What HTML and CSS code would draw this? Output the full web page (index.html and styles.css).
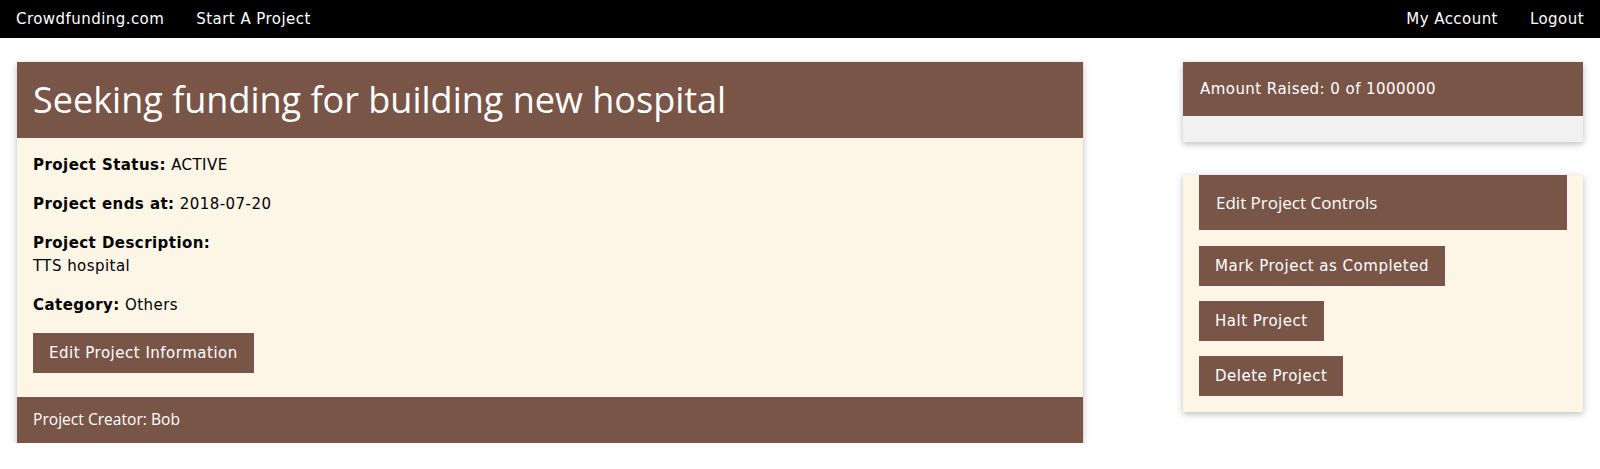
FILE: index.html
```html
<!DOCTYPE html>
<html lang="en">
<head>
<meta charset="utf-8">
<title>Crowdfunding.com</title>
<link rel="stylesheet" href="styles.css">
</head>
<body>
<nav class="topbar">
  <div class="topbar-group">
    <a class="topbar-link" href="#">Crowdfunding.com</a>
    <a class="topbar-link" href="#">Start A Project</a>
  </div>
  <div class="topbar-group">
    <a class="topbar-link" href="#">My Account</a>
    <a class="topbar-link" href="#">Logout</a>
  </div>
</nav>

<main class="page">
  <section class="card project-card">
    <header class="project-header">
      <h1 class="project-title">Seeking funding for building new hospital</h1>
    </header>
    <div class="project-body">
      <p class="field"><b>Project Status:</b> ACTIVE</p>
      <p class="field"><b>Project ends at:</b> 2018-07-20</p>
      <p class="field"><b>Project Description:</b><br>TTS hospital</p>
      <p class="field"><b>Category:</b> Others</p>
      <p class="field field-action"><button class="btn">Edit Project Information</button></p>
    </div>
    <footer class="project-footer">
      <p class="footer-text">Project Creator: Bob</p>
    </footer>
  </section>

  <aside class="side">
    <section class="card amount-card">
      <div class="amount-header">Amount Raised: 0 of 1000000</div>
      <div class="progress"><div class="progress-bar" style="width:0%"></div></div>
    </section>

    <section class="card controls-card">
      <div class="controls-header">Edit Project Controls</div>
      <div class="controls-list">
        <button class="btn">Mark Project as Completed</button>
        <button class="btn">Halt Project</button>
        <button class="btn">Delete Project</button>
      </div>
    </section>
  </aside>
</main>
</body>
</html>
```

FILE: styles.css
```css
* { box-sizing: border-box; }

html, body {
  margin: 0;
  padding: 0;
  background: #fff;
  color: #000;
  font-family: "DejaVu Sans", Verdana, sans-serif;
  font-size: 15px;
  line-height: 1.5;
  letter-spacing: 0.45px;
}

.topbar {
  display: flex;
  justify-content: space-between;
  background: #000;
  height: 38px;
}

.topbar-group {
  display: flex;
}

.topbar-link {
  display: block;
  padding: 8px 16px;
  color: #fff;
  text-decoration: none;
  line-height: 22px;
}

.page {
  display: flex;
  justify-content: space-between;
  align-items: flex-start;
  padding: 24px 17px 0 17px;
}

.card {
  box-shadow: 0 2px 5px 0 rgba(0,0,0,0.16), 0 2px 10px 0 rgba(0,0,0,0.12);
}

.project-card {
  width: 1066px;
  background: #fdf5e6;
}

.project-header {
  background: #795548;
  color: #fff;
  height: 76px;
  padding: 0 16px;
  display: flex;
  align-items: center;
}

.project-title {
  margin: 0;
  font-family: "Open Sans", "Noto Sans", sans-serif;
  font-weight: 400;
  font-size: 36px;
  line-height: 54px;
  letter-spacing: normal;
}

.project-body {
  padding: 0 16px;
  overflow: hidden;
}

.field {
  margin: 16px 0;
  line-height: 23px;
}

.field-action {
  margin-bottom: 24px;
}

.btn {
  display: inline-block;
  border: none;
  margin: 0;
  background: #795548;
  color: #fff;
  font-family: "DejaVu Sans", Verdana, sans-serif;
  font-size: 15px;
  letter-spacing: 0.5px;
  line-height: 22px;
  padding: 9px 16px;
  cursor: pointer;
}

.field .btn {
  vertical-align: top;
}

.project-footer {
  background: #795548;
  color: #fff;
  height: 46px;
  padding: 0 16px;
  display: flex;
  align-items: center;
}

.footer-text {
  margin: 0;
  font-family: "Open Sans", "Noto Sans", sans-serif;
  font-size: 15.6px;
  letter-spacing: normal;
}

.side {
  width: 400px;
  display: flex;
  flex-direction: column;
  gap: 33px;
}

.amount-header {
  background: #795548;
  color: #fff;
  height: 54px;
  padding: 0 17px;
  display: flex;
  align-items: center;
}

.progress {
  background: #f1f1f1;
  height: 26px;
}

.progress-bar {
  height: 100%;
  background: #795548;
}

.controls-card {
  background: #fdf5e6;
  padding: 0 16px 16px 16px;
}

.controls-header {
  background: #795548;
  color: #fff;
  height: 55px;
  padding: 0 17px;
  display: flex;
  align-items: center;
  font-family: "Open Sans", "Noto Sans", sans-serif;
  font-size: 17px;
  letter-spacing: normal;
}

.controls-list {
  display: flex;
  flex-direction: column;
  align-items: flex-start;
  gap: 15px;
  padding-top: 16px;
}
```
